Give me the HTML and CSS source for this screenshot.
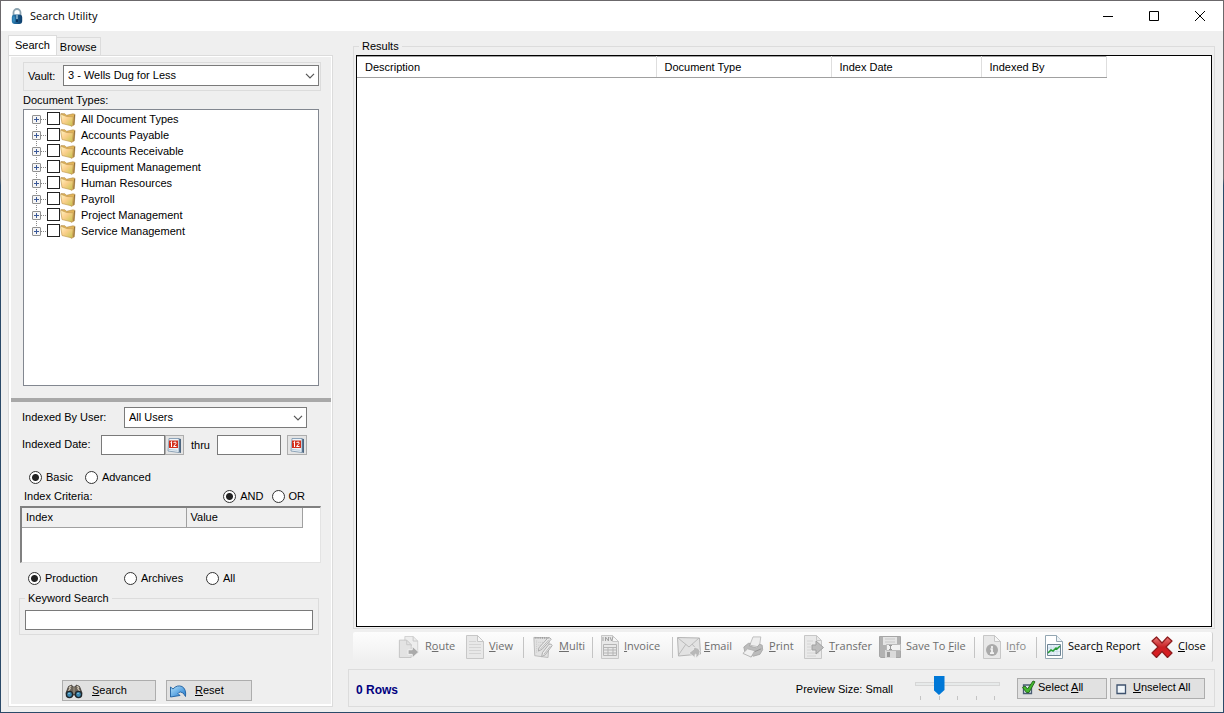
FILE: index.html
```html
<!DOCTYPE html>
<html lang="en">
<head>
<meta charset="utf-8">
<title>Search Utility</title>
<link rel="stylesheet" href="styles.css">
</head>
<body>
<svg class="defs" aria-hidden="true">
  <defs>
    <linearGradient id="gold" x1="0" y1="0" x2="1" y2="1"><stop offset="0" stop-color="#fff6c4"/><stop offset=".45" stop-color="#fbcf8c"/><stop offset="1" stop-color="#c3c54c"/></linearGradient>
    <linearGradient id="blue" x1="0" y1="0" x2="1" y2="1"><stop offset="0" stop-color="#b4e2fb"/><stop offset="1" stop-color="#1d78cf"/></linearGradient>
    <linearGradient id="lockfill" x1="0" y1="0" x2="1" y2="0"><stop offset="0" stop-color="#2f81b4"/><stop offset=".45" stop-color="#1c5f92"/><stop offset="1" stop-color="#0c3c69"/></linearGradient>
    <linearGradient id="red" x1="0" y1="0" x2="0" y2="1"><stop offset="0" stop-color="#e87a78"/><stop offset=".5" stop-color="#c92024"/><stop offset="1" stop-color="#e11c20"/></linearGradient>
    <symbol id="folder" viewBox="0 0 16 15"><path d="M1 1.500l4 .3 1.500 1.500 6.500-1.500 2 .6-.8 10.600-3 1.300z" fill="#e0b458" stroke="#b08a4a" stroke-width=".6"/><path d="M.6 2.200l4.400 1.600 1.500.7 6.800.3-1.200 9.200L2 11.500z" fill="url(#gold)" stroke="#c69c55" stroke-width=".7"/><path d="M14.600 2.800l-.9 10" stroke="#8a6a3c" stroke-width=".9"/></symbol>
    <symbol id="calendar" viewBox="0 0 15 17"><path d="M11.500 1.500l2.500.5v14l-2.500-.8z" fill="#4d6680"/><path d="M2 1.500h10v14L1 14z" fill="#eef4f9" stroke="#7591aa" stroke-width=".8"/><path d="M2 3.500h9v7.500H2z" fill="#d3301d"/><path d="M3.500 5.500l1-1v5.500M6.500 5.500q3-1.500 2.500 1l-2.500 3h3" fill="none" stroke="#fff"/><path d="M2 12.500l8.500.8" stroke="#b9cbd9"/></symbol>
    <symbol id="chevron" viewBox="0 0 10 6"><path d="M1 .8l4 4 4-4" fill="none" stroke="#555" stroke-width="1.200"/></symbol>
    <symbol id="page" viewBox="0 0 18 24"><path d="M.5.500h11l6 6v17H.500z" fill="#e8e8e8" stroke="#c7c7c7"/><path d="M11.500.500v6h6z" fill="#f6f6f6" stroke="#c7c7c7"/></symbol>
  </defs>
</svg>
<div class="window">
  <header class="titlebar">
    <svg class="lock" viewBox="0 0 12 17"><path d="M2.500 8V4.500a3.500 3.500 0 017 0V8" fill="none" stroke="#8da4b1" stroke-width="1.800"/><rect x=".8" y="6.500" width="10.400" height="9.500" rx="3" fill="url(#lockfill)"/><path d="M3 8.500v5" stroke="#4ba5d4"/><path d="M5 11.500h2V14H5z" fill="#0a335c"/><path d="M6 7v4" stroke="#d2e7f0"/></svg>
    <h1 class="title">Search Utility</h1>
    <button class="winbtn" aria-label="Minimize"><svg viewBox="0 0 10 10"><path d="M0 5.500h10" stroke="#000"/></svg></button>
    <button class="winbtn" aria-label="Maximize"><svg viewBox="0 0 10 10"><path d="M.5.500h9v9h-9z" fill="none" stroke="#000"/></svg></button>
    <button class="winbtn" aria-label="Close window"><svg viewBox="0 0 10 10"><path d="M0 0l10 10M10 0L0 10" stroke="#000"/></svg></button>
  </header>

  <main class="main">
    <aside class="side">
      <div class="tabs" role="tablist">
        <button class="tab active" role="tab" aria-selected="true">Search</button>
        <button class="tab" role="tab" aria-selected="false">Browse</button>
      </div>
      <div class="panel">
        <section class="upper">
          <div class="vault">
            <label for="vault">Vault:</label>
            <span class="combo"><select id="vault"><option>3 - Wells Dug for Less</option></select><svg class="chev"><use href="#chevron"/></svg></span>
          </div>
          <h2 class="doclabel">Document Types:</h2>
          <ul class="tree">
            <li><button class="expand" aria-label="Expand"></button><label><input type="checkbox"><svg class="folder"><use href="#folder"/></svg>All Document Types</label></li>
            <li><button class="expand" aria-label="Expand"></button><label><input type="checkbox"><svg class="folder"><use href="#folder"/></svg>Accounts Payable</label></li>
            <li><button class="expand" aria-label="Expand"></button><label><input type="checkbox"><svg class="folder"><use href="#folder"/></svg>Accounts Receivable</label></li>
            <li><button class="expand" aria-label="Expand"></button><label><input type="checkbox"><svg class="folder"><use href="#folder"/></svg>Equipment Management</label></li>
            <li><button class="expand" aria-label="Expand"></button><label><input type="checkbox"><svg class="folder"><use href="#folder"/></svg>Human Resources</label></li>
            <li><button class="expand" aria-label="Expand"></button><label><input type="checkbox"><svg class="folder"><use href="#folder"/></svg>Payroll</label></li>
            <li><button class="expand" aria-label="Expand"></button><label><input type="checkbox"><svg class="folder"><use href="#folder"/></svg>Project Management</label></li>
            <li><button class="expand" aria-label="Expand"></button><label><input type="checkbox"><svg class="folder"><use href="#folder"/></svg>Service Management</label></li>
          </ul>
        </section>
        <section class="lower">
          <div class="row user">
            <label for="user">Indexed By User:</label>
            <span class="combo"><select id="user"><option>All Users</option></select><svg class="chev"><use href="#chevron"/></svg></span>
          </div>
          <div class="row dates">
            <label for="from">Indexed Date:</label>
            <input class="box" id="from" type="text">
            <button class="calbtn" aria-label="Pick start date"><svg><use href="#calendar"/></svg></button>
            <label class="thru" for="to">thru</label>
            <input class="box" id="to" type="text">
            <button class="calbtn last" aria-label="Pick end date"><svg><use href="#calendar"/></svg></button>
          </div>
          <div class="row mode">
            <label class="radio"><input type="radio" name="mode" checked>Basic</label>
            <label class="radio"><input type="radio" name="mode">Advanced</label>
          </div>
          <div class="row criteria">
            <span class="grow">Index Criteria:</span>
            <label class="radio"><input type="radio" name="op" checked>AND</label>
            <label class="radio"><input type="radio" name="op">OR</label>
          </div>
          <div class="indexbox">
            <table class="index"><thead><tr><th class="c-index">Index</th><th>Value</th></tr></thead></table>
          </div>
          <div class="row scope">
            <label class="radio"><input type="radio" name="scope" checked>Production</label>
            <label class="radio"><input type="radio" name="scope">Archives</label>
            <label class="radio"><input type="radio" name="scope">All</label>
          </div>
          <fieldset class="keyword">
            <legend><label for="keyword">Keyword Search</label></legend>
            <input class="box" id="keyword" type="text">
          </fieldset>
          <div class="actions">
            <button class="btn search"><svg viewBox="0 0 18 16"><path d="M1 10l2.500-6.500 3-1.500 1.500 2h2l1.500-2 3 1.500L17 10l-1 3-6-1H8l-6 1z" fill="#6b645b" stroke="#35302c" stroke-width=".8"/><path d="M4 5l2-2M12 3l2 2M3.500 8l2-3M12.500 5l2 3" stroke="#cfc6b5" stroke-width="1.300"/><path d="M9 4v7" stroke="#a39a88"/><circle cx="4.500" cy="11.500" r="3.100" fill="#3b87b0" stroke="#1f262b" stroke-width="1.400"/><circle cx="13.500" cy="11.500" r="3.100" fill="#3b87b0" stroke="#1f262b" stroke-width="1.400"/><path d="M3.500 11l1-1M12.500 11l1-1" stroke="#b9e8ff"/></svg><span><u>S</u>earch</span></button>
            <button class="btn reset"><svg viewBox="0 0 18 16"><path d="M1.500 4L4 6q4-4.500 9-2.500 4.500 2.500 3.500 10-2-4.500-5-4.500-1.500 0-2.500 1.500l2 2L1.500 14z" fill="url(#blue)" stroke="#1c5e9f" stroke-width=".9" stroke-linejoin="round"/></svg><span><u>R</u>eset</span></button>
          </div>
        </section>
      </div>
    </aside>

    <section class="content">
      <fieldset class="results">
        <legend>Results</legend>
        <div class="grid">
          <table class="list"><thead><tr><th class="c-desc">Description</th><th class="c-type">Document Type</th><th class="c-date">Index Date</th><th class="c-by">Indexed By</th></tr></thead></table>
        </div>
      </fieldset>

      <div class="toolbar" role="toolbar">
        <button class="tool" disabled><svg class="w22" viewBox="0 0 22 24"><path d="M6.500.500h9l5 5v13h-14z" fill="#ededed" stroke="#cfcfcf"/><path d="M.5 4.500h8l5 5v14H.500z" fill="#e3e3e3" stroke="#c2c2c2"/><path d="M8.500 4.500v5h5M15.500.500v5h5" fill="none" stroke="#c6c6c6"/><path d="M10 15h4.500v-4l7 6.500-7 6.500v-4H10z" fill="#aaa" stroke="#f6f6f6"/></svg><span>R<u>o</u>ute</span></button>
        <button class="tool sep" disabled><svg class="w18" viewBox="0 0 18 24"><use href="#page"/><path d="M3 6.500h7M3 9.500h12M3 12.500h12M3 15.500h12M3 18.500h12" stroke="#d4d4d4"/></svg><span><u>V</u>iew</span></button>
        <button class="tool sep" disabled><svg class="w22" viewBox="0 0 22 24"><path d="M1 1.500l17 .5-1.500 21.500L2 21.500z" fill="#e2e2e2" stroke="#b9b9b9"/><path d="M2 2h15" stroke="#999" stroke-dasharray="1 1" stroke-width="2"/><path d="M4 5v14M6 7h5M6 10h4" stroke="#c5c5c5" stroke-dasharray="1 1"/><path d="M6.500 13L16 2.500q3-1.500 4 1L10 14.500l-4 2z" fill="#ececec" stroke="#a8a8a8"/><path d="M10.500 18L17.500 9q3-1 3.500 1.500l-7.500 10-4 2z" fill="#ececec" stroke="#a8a8a8"/><path d="M8 14.500l9.500-10.500M12 20l7-9" stroke="#b5b5b5"/></svg><span><u>M</u>ulti</span></button>
        <button class="tool sep wide" disabled><svg class="w18" viewBox="0 0 18 24"><use href="#page"/><path d="M2 6V2M4.500 6V2l3 4V2M9 2l1.500 4L12 2" fill="none" stroke="#a2a2a2"/><path d="M2.500 9.500h13v11h-13zM2.500 12.500h13M2.500 15h13M2.500 18h13M7 12.500v8M12 12.500v8" fill="none" stroke="#b5b5b5"/></svg><span><u>I</u>nvoice</span></button>
        <button class="tool email" disabled><svg class="w24" viewBox="0 0 24 24"><path d="M.5 2.500l22 .5 1 16-22 2z" fill="#e2e2e2" stroke="#b4b4b4"/><path d="M1 3l11 9L22 3M1.500 20l7.500-11M23 18l-8-9" fill="none" stroke="#bbb"/><path d="M16 12.500q6-.5 7 4 0 4-4 6.500v-4l-1 .5v3L12 18l5-4z" fill="#b8b8b8" stroke="#eee" stroke-width=".8"/></svg><span><u>E</u>mail</span></button>
        <button class="tool" disabled><svg class="w22" viewBox="0 0 22 24"><path d="M7.500 10L11 1h8.500l-1.500 11z" fill="#eee" stroke="#bbb"/><path d="M1 12l5-4h2l-1 3 8 2 3-4 3 1 .5 5-3 5-7 2L2 17z" fill="#bcbcbc" stroke="#a8a8a8"/><path d="M0 19l5-5 8 2-4 7z" fill="#f0f0f0" stroke="#b1b1b1"/><path d="M13 17l7-3" stroke="#929292"/></svg><span><u>P</u>rint</span></button>
        <button class="tool" disabled><svg class="w20" viewBox="0 0 20 24"><path d="M.5.500h12l5 5v18H.500z" fill="#e9e9e9" stroke="#c7c7c7"/><path d="M12.500.500v5h5" fill="none" stroke="#c7c7c7"/><path d="M3 6h6M3 9h4M3 12h4M3 15h4M3 18h12M3 21h9" stroke="#d4d4d4"/><path d="M8 10h4V6l7.500 6.500L12 19v-4H8z" fill="#bdbdbd" stroke="#a0a0a0"/></svg><span><u>T</u>ransfer</span></button>
        <button class="tool sep save" disabled><svg class="w22" viewBox="0 0 22 22"><path d="M.5.500h21v21H2l-1.500-1z" fill="#b2b2b2" stroke="#a6a6a6"/><path d="M4 1h14v8H4z" fill="#e5e5e5"/><path d="M6 3h10M6 6h10" stroke="#c9c9c9"/><path d="M6 14h11v8H6z" fill="#dadada"/><path d="M8 16h3v5H8z" fill="#999"/><path d="M7.500 8.500h14v6h-14z" fill="#f2f2f2" stroke="#bbb"/><path d="M10 9.500h3M11.500 9.500v4M10 13.500h3" stroke="#999"/></svg><span>Save To <u>F</u>ile</span></button>
        <button class="tool sep info" disabled><svg class="w18" viewBox="0 0 18 24"><use href="#page"/><circle cx="9" cy="15" r="6" fill="#aaa"/><path d="M9 11v2M7.500 14.200H9V18M7 18.200h4" fill="none" stroke="#f2f2f2" stroke-width="1.800"/></svg><span>I<u>n</u>fo</span></button>
        <button class="tool"><svg class="w18" viewBox="0 0 18 24"><path d="M.5.500h11l6 6v17H.500z" fill="#fff" stroke="#93a6b2"/><path d="M11.500.500v6h6" fill="#edf2f5" stroke="#93a6b2"/><path d="M2.500 9.500h13v11h-13z" fill="#e7f2fb" stroke="#6d8393"/><path d="M6 10v10M9 10v10M12 10v10M3 13h12M3 16.500h12" stroke="#c6d8e5" stroke-width=".7"/><path d="M3 18l3-3 2 1 3-3 1 1 3-3" fill="none" stroke="#259c35" stroke-width="1.500"/></svg><span>Searc<u>h</u> Report</span></button>
        <button class="tool"><svg class="w22" viewBox="0 0 22 22"><path d="M1 5l4.500-4L11 7l5.500-6L21 5l-6 6 6 6-4.500 4.500L11 15.500l-5.500 6L1 17l6-6z" fill="url(#red)" stroke="#8d1b1d" stroke-width="1.200" stroke-linejoin="round"/></svg><span><u>C</u>lose</span></button>
      </div>

      <footer class="status">
        <strong class="count">0 Rows</strong>
        <label for="size">Preview Size: Small</label>
        <div class="slider">
          <input id="size" type="range" min="0" max="4" value="1">
          <div class="ticks"><i></i><i></i><i></i><i></i><i></i></div>
        </div>
        <button class="btn select"><svg viewBox="0 0 16 16"><path d="M2.500 5h8v8.500h-8z" fill="#dbe5ee" stroke="#4a5c72" stroke-width="1.300"/><path d="M1.500 7.500l2.500-1.500 2.500 3L12 1l2 .8L8 12.500H5.500z" fill="#43b82d" stroke="#215f19" stroke-width=".9"/></svg><span>Select <u>A</u>ll</span></button>
        <button class="btn unselect"><svg viewBox="0 0 16 16"><path d="M4 5h8.500v8.500H4z" fill="#f1f6fa" stroke="#3f536f" stroke-width="1.300"/></svg><span><u>U</u>nselect All</span></button>
      </footer>
    </section>
  </main>
</div>
</body>
</html>
```
FILE: styles.css
```css
* { box-sizing: border-box; }
body { margin: 0; font: 11px/16px "Liberation Sans", Arial, sans-serif; color: #000; }
button, input, select { font: inherit; color: inherit; margin: 0; padding: 0; border-radius: 0; }
svg { display: block; flex: none; }
h1, h2 { margin: 0; font: inherit; }
fieldset { margin: 0; min-width: 0; border: 1px solid #dcdcdc; }
legend { padding: 0 3px; }
.defs { position: absolute; width: 0; height: 0; }

.window { min-height: 100vh; display: flex; flex-direction: column; padding: 1px; background: linear-gradient(#6b686b 25%, #2b4a69 26%); }

.titlebar { height: 30px; flex: none; display: flex; align-items: center; background: #fff; padding-left: 10px; }
.lock { width: 12px; height: 17px; }
.title { flex: 1; margin-left: 7px; font-family: "Open Sans", "Noto Sans", sans-serif; }
.winbtn { width: 46px; height: 30px; border: 0; background: none; display: grid; place-items: center; }
.winbtn svg { width: 10px; height: 10px; }

.main { flex: 1; display: flex; gap: 15px; padding: 4px 8px 5px 7px; background: #efefef; }

.side { width: 325px; flex: none; display: flex; flex-direction: column; }
.tabs { display: flex; align-items: flex-end; height: 20px; }
.tab { height: 18px; padding: 0 3px; border: 1px solid #dcdcdc; border-width: 1px 1px 0 0; background: #f0f0f0; }
.tab.active { height: 20px; padding: 0 6px 2px; border-left-width: 1px; background: #fff; }
.panel { flex: 1; display: flex; flex-direction: column; border: 1px solid #dcdcdc; padding: 1px 1px 2px 2px; background: #fff; }

.upper { flex: 1; display: flex; flex-direction: column; padding: 5px 10px 12px 12px; background: #efefef; border-bottom: 4px solid #a8a8a8; }
.vault { display: flex; align-items: center; height: 29px; padding: 0 1px 2px 4px; border: 1px solid #dcdcdc; }
.vault label { width: 35px; }
.combo { flex: 1; display: grid; align-items: center; height: 21px; }
.combo select { grid-area: 1 / 1; height: 21px; width: 100%; padding: 0 0 1px 4px; appearance: none; border: 1px solid #7a7a7a; background: #fff; }
.chev { grid-area: 1 / 1; justify-self: end; margin-right: 4px; width: 10px; height: 6px; pointer-events: none; }
.doclabel { margin-top: 1px; }
.tree { flex: 1; margin: 1px 2px 0 0; padding: 1px 8px; border: 1px solid #828790; background: #fff; list-style: none; }
.tree li { height: 16px; display: flex; align-items: center; background: repeating-linear-gradient(90deg, #888 0 1px, #fff 1px 2px) 9px 8px / 6px 1px no-repeat, repeating-linear-gradient(#888 0 1px, #fff 1px 2px) 4px 0 / 1px 16px no-repeat; }
.tree li:first-child { background-position: 9px 8px, 4px 8px; }
.tree li:last-child { background-size: 6px 1px, 1px 8px; }
.expand { width: 9px; height: 9px; border: 1px solid #919191; border-radius: 1px; background: linear-gradient(#3b5998, #3b5998) center / 5px 1px no-repeat, linear-gradient(#3b5998, #3b5998) center / 1px 5px no-repeat, #f5f5f5; }
.tree label { display: flex; align-items: center; margin-left: 6px; line-height: 18px; }
.tree input { appearance: none; width: 13px; height: 13px; margin-bottom: 2px; border: 1px solid #222; background: #fff; }
.folder { width: 16px; height: 15px; margin-right: 5px; }

.lower { flex: none; height: 302px; display: flex; flex-direction: column; padding: 5px 10px 3px 11px; background: #efefef; }
.row { display: flex; align-items: center; height: 16px; }
.user { height: 21px; padding-right: 14px; }
.user label { width: 102px; padding-bottom: 2px; }
.dates { height: 20px; margin-top: 7px; }
.dates > label:first-child { width: 79px; padding-bottom: 2px; }
.box { height: 20px; border: 1px solid #7a7a7a; background: #fff; }
.dates .box { width: 64px; }
.calbtn { width: 19px; height: 20px; border: 1px solid #adadad; background: #e4e4e4; display: grid; place-items: center; }
.calbtn svg { width: 15px; height: 17px; }
.calbtn.last { width: 20px; margin-left: 6px; }
.thru { width: 33px; padding-left: 7px; }
.radio { display: flex; align-items: center; gap: 4px; }
.radio input { appearance: none; width: 13px; height: 13px; border: 1px solid #333; border-radius: 50%; background: #fff; }
.radio input:checked { background: radial-gradient(circle, #222 3px, #fff 4px); }
.mode { margin-top: 14px; padding-left: 7px; gap: 12px; }
.criteria { margin-top: 3px; padding: 0 16px 0 2px; gap: 8px; }
.grow { flex: 1; }
.indexbox { height: 57px; margin: 2px 0 0 -2px; border: 1px solid #e3e3e3; border-top: 2px solid #808080; border-left: 2px solid #808080; background: #fff; }
.index, .list { border-collapse: collapse; table-layout: fixed; }
.index { width: 281px; }
th { font-weight: normal; text-align: left; padding: 0; }
.index th { height: 19px; padding-left: 4px; background: #f0f0f0; border-bottom: 1px solid #a0a0a0; border-right: 1px solid #a0a0a0; }
.c-index { width: 164px; }
.scope { margin-top: 7px; padding-left: 6px; }
.scope .radio:first-child { width: 96px; }
.scope .radio:nth-child(2) { width: 82px; }
.keyword { margin: 4px 2px 0 -3px; padding: 4px 5px; }
.keyword .box { display: block; width: 100%; }
.actions { display: flex; gap: 10px; margin-top: auto; padding-left: 40px; }
.btn { height: 21px; display: flex; align-items: center; border: 1px solid #adadad; background: #e1e1e1; }
.btn svg { width: 18px; height: 16px; }
.btn span { padding-bottom: 2px; }
.search { width: 94px; padding-left: 2px; gap: 9px; }
.reset { width: 86px; padding-left: 2px; gap: 8px; }

.content { flex: 1; min-width: 0; display: flex; flex-direction: column; }
.results { flex: 1; display: flex; flex-direction: column; margin: 3px 0 0 5px; padding: 1px 2px; }
.results legend { margin-left: 3px; }
.grid { flex: 1; border: 1px solid #000; background: #fff; }
.list { width: 750px; }
.list th { height: 21px; padding-left: 8px; border: solid #a0a0a0; border-width: 1px 0; border-right: 1px solid #dedede; }
.c-desc { width: 299px; }
.c-type { width: 175px; }
.c-date { width: 150px; }

.toolbar { display: grid; grid-template-columns: 68px 66px 69px 76px 65px 62px 75px 104px 62px 106px 61px; justify-content: end; margin: 3px 2px 0 5px; height: 30px; border-right: 1px solid #d0d0d0; border-radius: 2px; background: linear-gradient(#fdfdfd, #efefef); font-family: "Open Sans", "Noto Sans", sans-serif; }
.tool { display: flex; align-items: center; gap: 5px; border: 0; background: none; white-space: nowrap; text-align: left; }
.tool:disabled { color: #6d6d6d; }
.tool.info { color: #8a8a8a; }
.tool span { padding-bottom: 2px; }
.tool svg { height: 24px; }
.tool .w24 { width: 24px; }
.tool .w22 { width: 22px; height: 22px; }
.tool .w20 { width: 20px; }
.tool .w18 { width: 18px; }
.email { gap: 3px; }
.sep { background: linear-gradient(#c4c4c4, #c4c4c4) right 8px center / 1px 21px no-repeat; }
.sep.wide { background-position: right 4px center; }

.status { display: flex; align-items: center; height: 38px; margin-top: 7px; padding: 0 9px 0 7px; border: 1px solid #dcdcdc; }
.count { flex: 1; padding-top: 4px; font-size: 12px; color: #000080; }
.status label { padding-top: 2px; }
.slider { width: 85px; margin: 0 17px 0 22px; }
.slider input { display: block; width: 100%; height: 19px; appearance: none; background: linear-gradient(#e7eaea, #e7eaea) 1px 7px / 83px 2px no-repeat, linear-gradient(#d6d6d6, #d6d6d6) 0 6px / 85px 4px no-repeat; }
.slider input::-webkit-slider-thumb { appearance: none; width: 11px; height: 19px; background: #0078d7; clip-path: polygon(0 0, 100% 0, 100% 74%, 50% 100%, 0 74%); }
.ticks { display: flex; justify-content: space-between; padding: 1px 5px 0; }
.ticks i { width: 1px; height: 4px; background: #c4c4c4; }
.select { width: 90px; padding-left: 3px; }
.unselect { width: 95px; margin-left: 3px; padding-left: 2px; }
.select svg, .unselect svg { width: 16px; height: 16px; }
.select { gap: 1px; }
.unselect { gap: 4px; }
```
